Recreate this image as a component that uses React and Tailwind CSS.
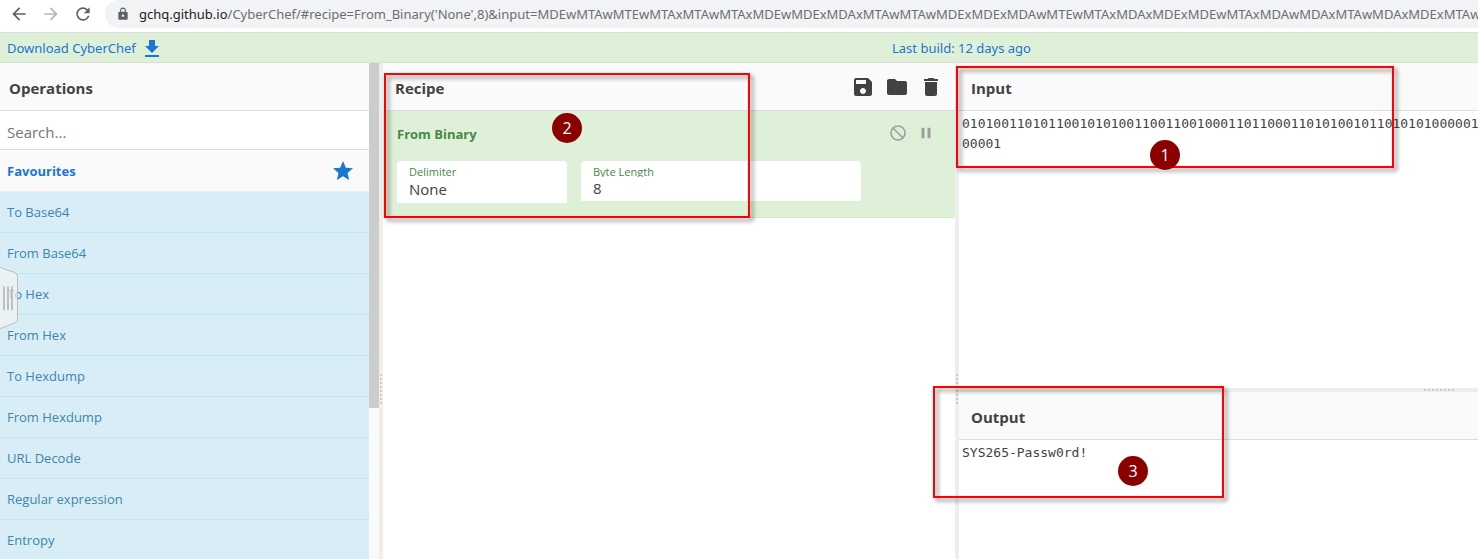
import {
  MdArrowBack,
  MdArrowForward,
  MdRefresh,
  MdLock,
  MdFileDownload,
  MdSave,
  MdFolder,
  MdDelete,
  MdStar,
  MdPause,
} from "react-icons/md";

const OPERATIONS = [
  "To Base64",
  "From Base64",
  "To Hex",
  "From Hex",
  "To Hexdump",
  "From Hexdump",
  "URL Decode",
  "Regular expression",
  "Entropy",
];

const INPUT_TEXT =
  "0101001101011001010100110011001000110110001101010010110101010000011\n00001";

const URL_PATH =
  "/CyberChef/#recipe=From_Binary('None',8)&input=MDEwMTAwMTEwMTAxMTAwMTAxMDEwMDExMDAxMTAwMTAwMDExMDExMDAwMTEwMTAxMDAxMDExMDEwMTAxMDAwMDAxMTAwMDAxMDExMTAw";

function BrowserBar() {
  return (
    <div className="flex h-8 shrink-0 items-start bg-white">
      <div className="flex h-7 w-[105px] shrink-0 items-center gap-3 pl-[9px] text-[#5f6368]">
        <button type="button" aria-label="Back">
          <MdArrowBack size={20} />
        </button>
        <button type="button" aria-label="Forward" className="text-[#b4b6b9]">
          <MdArrowForward size={20} />
        </button>
        <button type="button" aria-label="Reload">
          <MdRefresh size={20} />
        </button>
      </div>
      <div className="flex h-7 min-w-0 flex-1 items-center gap-[9px] overflow-hidden rounded-l-full bg-[#f1f3f4] pl-[11px]">
        <MdLock size={14} className="shrink-0 text-[#5f6368]" />
        <span className="font-['Noto_Sans',sans-serif] text-[13px] leading-5 whitespace-nowrap text-[#6b6f73]">
          <span className="text-[#202124]">gchq.github.io</span>
          {URL_PATH}
        </span>
      </div>
    </div>
  );
}

function Banner() {
  return (
    <div className="grid h-[31px] shrink-0 grid-cols-[892fr_586fr] items-center border-y border-[#ddd] bg-[#dff0d8] pt-[2px] font-['Noto_Sans',sans-serif] text-[13px] text-[#1976d2]">
      <a href="#download" className="flex items-center gap-1 pl-[7px]">
        Download CyberChef
        <MdFileDownload size={24} />
      </a>
      <a href="#build">Last build: 12 days ago</a>
    </div>
  );
}

function PanelTitle({ children, className = "" }) {
  return (
    <div
      className={`flex h-12 shrink-0 items-center border-b border-[#ddd] bg-[#fafafa] ${className}`}
    >
      {children}
    </div>
  );
}

function Dots({ vertical }) {
  return (
    <div className={vertical ? "flex flex-col gap-[2px]" : "flex gap-[2px]"}>
      {[0, 1, 2, 3, 4, 5, 6, 7].map((n) => (
        <span key={n} className="size-[2px] bg-[#ccc]" />
      ))}
    </div>
  );
}

function VerticalGutter() {
  return (
    <div className="flex flex-col items-center bg-[#eee]">
      <div className="flex-[2]" />
      <Dots vertical />
      <div className="flex-1" />
    </div>
  );
}

function Operations() {
  return (
    <section className="flex min-h-0 overflow-hidden">
      <div className="flex min-w-0 flex-1 flex-col">
        <PanelTitle className="pl-[9px]">
          <h2 className="pt-1 text-[15px] font-bold">Operations</h2>
        </PanelTitle>
        <input
          type="search"
          aria-label="Search operations"
          placeholder="Search..."
          className="h-[39px] shrink-0 border-b border-[#ddd] bg-white px-[7px] pt-1 text-[15px] outline-none placeholder:text-[#757575]"
        />
        <a
          href="#favourites"
          className="flex h-[42px] shrink-0 items-center justify-between border-b border-[#eee] bg-[#fafafa] pr-[14px] pl-[7px] text-[13px] font-bold text-[#1976d2]"
        >
          <span className="pt-[2px]">Favourites</span>
          <MdStar size={24} />
        </a>
        <ul className="text-[13px] text-[#3a87ad]">
          {OPERATIONS.map((name) => (
            <li
              key={name}
              className="flex h-[41px] items-center border-b border-[#bce8f1] bg-[#d9edf7] px-[7px] pt-[2px]"
            >
              {name}
            </li>
          ))}
        </ul>
      </div>
      <div className="w-[10px] shrink-0 bg-[#fafafa]">
        <div className="h-[345px] bg-[#ccc]" />
      </div>
    </section>
  );
}

function Recipe() {
  return (
    <section className="flex min-w-0 flex-col bg-white">
      <PanelTitle className="justify-between pr-3 pl-3">
        <h2 className="pt-1 text-[15px] font-bold">Recipe</h2>
        <div className="flex gap-[10px]">
          <button type="button" aria-label="Save recipe">
            <MdSave size={24} />
          </button>
          <button type="button" aria-label="Load recipe">
            <MdFolder size={24} />
          </button>
          <button type="button" aria-label="Clear recipe">
            <MdDelete size={24} />
          </button>
        </div>
      </PanelTitle>
      <div className="border-b border-[#d6e9c6] bg-[#dff0d8] px-[14px] pt-3 pb-[14px] text-[#468847]">
        <div className="flex h-5 items-center justify-between pr-[6px]">
          <h3 className="pt-1 text-[13px] font-bold">From Binary</h3>
          <div className="flex items-center gap-[10px] text-[#9e9e9e]">
            <button type="button" aria-label="Disable operation">
              <svg
                width="18"
                height="18"
                viewBox="0 0 18 18"
                fill="none"
                stroke="currentColor"
                strokeWidth="1.6"
              >
                <circle cx="9" cy="9" r="7" />
                <path d="M4 4l10 10" />
              </svg>
            </button>
            <button type="button" aria-label="Set breakpoint">
              <MdPause size={18} />
            </button>
          </div>
        </div>
        <div className="mt-[18px] flex items-start gap-[14px]">
          <div className="flex h-[42px] w-[170px] flex-col rounded-t bg-white px-3 pt-[3px]">
            <label htmlFor="delimiter" className="h-[15px] text-[11px] leading-4">
              Delimiter
            </label>
            <select
              id="delimiter"
              className="h-5 appearance-none bg-transparent text-[15px] leading-5 text-[#424242] outline-none"
            >
              <option>None</option>
            </select>
          </div>
          <div className="flex h-10 w-[280px] flex-col rounded-t bg-white px-3 pt-[3px]">
            <label
              htmlFor="byte-length"
              className="h-[13px] overflow-hidden text-[11px] leading-4"
            >
              Byte Length
            </label>
            <input
              id="byte-length"
              type="text"
              defaultValue="8"
              className="mt-[1px] h-5 bg-transparent text-[15px] leading-5 text-[#424242] outline-none"
            />
          </div>
        </div>
      </div>
    </section>
  );
}

function InputOutput() {
  return (
    <div className="grid min-w-0 grid-rows-[minmax(0,325fr)_4px_minmax(0,167fr)]">
      <section className="flex min-w-0 flex-col bg-white">
        <PanelTitle className="pl-3">
          <h2 className="pt-1 text-[15px] font-bold">
            <label htmlFor="input-text">Input</label>
          </h2>
        </PanelTitle>
        <textarea
          id="input-text"
          wrap="off"
          spellCheck={false}
          defaultValue={INPUT_TEXT}
          className="min-h-0 flex-1 resize-none overflow-hidden bg-white pt-[3px] pl-[3px] font-['DejaVu_Sans_Mono',monospace] text-[13px] leading-5 outline-none"
        />
      </section>
      <div className="flex items-center justify-end bg-[#eee] pr-6">
        <Dots />
      </div>
      <section className="flex min-w-0 flex-col bg-white">
        <PanelTitle className="pl-3">
          <h2 className="pt-1 text-[15px] font-bold">
            <label htmlFor="output-text">Output</label>
          </h2>
        </PanelTitle>
        <textarea
          id="output-text"
          readOnly
          spellCheck={false}
          defaultValue="SYS265-Passw0rd!"
          className="min-h-0 flex-1 resize-none overflow-hidden bg-white pt-[3px] pl-[3px] font-['DejaVu_Sans_Mono',monospace] text-[13px] leading-5 outline-none"
        />
      </section>
    </div>
  );
}

function SideHandle() {
  return (
    <svg
      className="pointer-events-none absolute top-[266px] left-0"
      width="19"
      height="64"
      viewBox="0 0 19 64"
      fill="none"
    >
      <path
        d="M-1 1L14.500 6.500Q17.500 7.500 17.500 10.500V53Q17.500 56 14.500 57L-1 63Z"
        fill="#f5f5f5"
        fillOpacity="0.65"
        stroke="#bdbdbd"
      />
      <path d="M4 20.500V44M8 20.500V44M12 20.500V44" stroke="#bdc1c4" strokeWidth="2" />
    </svg>
  );
}

function Callout({ box, badge, label }) {
  return (
    <>
      <div
        className={`pointer-events-none absolute border-2 border-[#f00] drop-shadow-[3px_3px_2px_rgba(0,0,0,0.5)] ${box}`}
      />
      <div
        className={`pointer-events-none absolute flex size-[30px] items-center justify-center rounded-full bg-[#8b0000] text-base text-white ${badge}`}
      >
        {label}
      </div>
    </>
  );
}

export default function App() {
  return (
    <div className="relative flex h-screen flex-col overflow-hidden bg-white font-['Open_Sans',sans-serif] text-[#424242]">
      <BrowserBar />
      <Banner />
      <main className="grid min-h-0 flex-1 grid-cols-[minmax(0,379fr)_4px_minmax(0,572fr)_4px_minmax(0,519fr)] grid-rows-[minmax(0,1fr)]">
        <Operations />
        <VerticalGutter />
        <Recipe />
        <VerticalGutter />
        <InputOutput />
      </main>
      <SideHandle />
      <Callout
        label="1"
        box="left-[956px] top-[66px] h-[102px] w-[438px]"
        badge="left-[1150px] top-[140px]"
      />
      <Callout
        label="2"
        box="left-[384px] top-[73px] h-[145px] w-[366px]"
        badge="left-[552px] top-[113px]"
      />
      <Callout
        label="3"
        box="left-[933px] top-[386px] h-[112px] w-[291px]"
        badge="left-[1118px] top-[456px]"
      />
    </div>
  );
}
